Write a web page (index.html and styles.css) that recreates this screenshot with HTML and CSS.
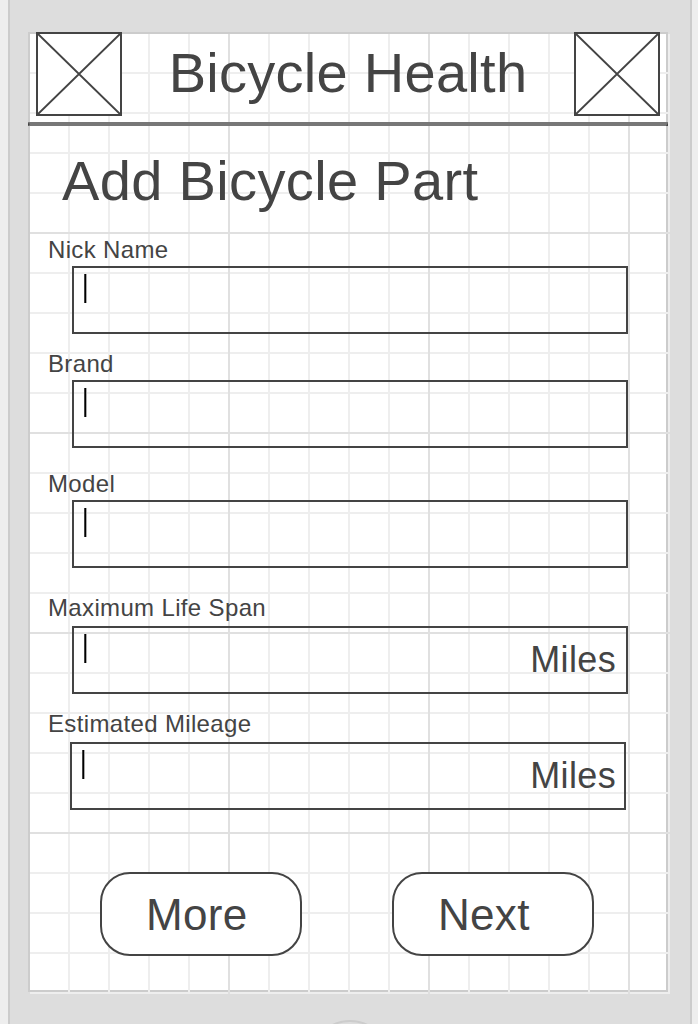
FILE: index.html
```html
<!DOCTYPE html>
<html lang="en">
<head>
<meta charset="utf-8">
<title>Bicycle Health</title>
<link rel="stylesheet" href="styles.css">
</head>
<body>
<div class="phone">
  <main class="screen">
    <div class="grid"></div>
    <header class="header">
      <svg class="placeholder" viewBox="0 0 86 84"><rect x="1" y="1" width="84" height="82"/><path d="M1 1L85 83M85 1L1 83"/></svg>
      <h1 class="title">Bicycle Health</h1>
      <svg class="placeholder" viewBox="0 0 86 84"><rect x="1" y="1" width="84" height="82"/><path d="M1 1L85 83M85 1L1 83"/></svg>
    </header>
    <svg class="rule" viewBox="0 0 640 4"><path class="rule-bar" d="M0 0H640V4H0Z"/><path class="rule-end" d="M0 1L2 2L0 4ZM640 1L638 4H640Z"/></svg>
    <h2 class="heading">Add Bicycle Part</h2>
    <form class="form">
      <div class="row"><label class="label">Nick Name</label><div class="field"><span class="caret"></span></div></div>
      <div class="row row-brand"><label class="label">Brand</label><div class="field"><span class="caret"></span></div></div>
      <div class="row row-model"><label class="label">Model</label><div class="field"><span class="caret"></span></div></div>
      <div class="row row-life"><label class="label">Maximum Life Span</label><div class="field"><span class="caret"></span><span class="unit">Miles</span></div></div>
      <div class="row row-mileage"><label class="label">Estimated Mileage</label><div class="field"><span class="caret"></span><span class="unit">Miles</span></div></div>
      <div class="actions">
        <button class="button" type="button">More</button>
        <button class="button" type="button">Next</button>
      </div>
    </form>
  </main>
  <div class="home"></div>
</div>
</body>
</html>
```
FILE: styles.css
```css
* { box-sizing: border-box; }
body {
  margin: 0;
  height: 1024px;
  overflow: hidden;
  background: #eee;
  color: #444;
  font-family: "Liberation Sans", Arial, sans-serif;
  letter-spacing: 0.35px;
}
.phone {
  width: 684px;
  height: 1024px;
  overflow: hidden;
  margin-left: 8px;
  padding: 32px 18px 0;
  background: #ddd;
  border: 2px solid #ccc;
  border-width: 0 2px;
}
.screen {
  position: relative;
  width: 640px;
  height: 960px;
  background: #fff;
  box-shadow: inset 0 0 0 2px #ccc;
}
.grid {
  position: absolute;
  left: 2px;
  top: 2px;
  width: 640px;
  height: 960px;
  background:
    linear-gradient(to right, transparent 198px, #e0e0e0 198px) 0 0 / 200px 200px,
    linear-gradient(to bottom, transparent 198px, #e0e0e0 198px) 0 0 / 200px 200px,
    linear-gradient(to right, transparent 38px, #eee 38px) 0 0 / 40px 40px,
    linear-gradient(to bottom, transparent 38px, #eee 38px) 0 0 / 40px 40px;
}
.header, .rule, .heading, .form { position: relative; }
.header {
  display: flex;
  justify-content: space-between;
  height: 90px;
  padding: 0 8px;
}
.placeholder { width: 86px; height: 84px; fill: #fff; stroke: #444; stroke-width: 2; }
.placeholder path { stroke-width: 1.8; }
.title, .heading {
  margin: 0;
  font-size: 56px;
  font-weight: 400;
  line-height: 63px;
  white-space: nowrap;
}
.title { padding-top: 9px; letter-spacing: 0.28px; }
.rule { display: block; width: 640px; height: 4px; }
.rule-bar { fill: #777; }
.rule-end { fill: #444; }
.heading { padding: 23px 0 0 34px; }
.form { display: flex; flex-direction: column; padding: 24px 0 0 20px; }
.row { display: flex; flex-direction: column; gap: 3px; }
.row-brand { margin-top: 16px; }
.row-model { margin-top: 22px; }
.row-life { margin-top: 26px; gap: 5px; }
.row-mileage { margin-top: 16px; gap: 5px; }
.label { font-size: 24px; line-height: 27px; }
.field {
  display: flex;
  justify-content: space-between;
  width: 556px;
  height: 68px;
  margin-left: 24px;
  padding: 6px 10px 0 10px;
  border: 2px solid #444;
}
.row-mileage .field { margin-left: 22px; padding-right: 8px; }
.caret {
  width: 3px;
  height: 29px;
  background: linear-gradient(to right, #444 1px, #000 1px 2px, #aaa 2px);
}
.unit { padding-top: 5px; font-size: 36px; line-height: 41px; }
.actions { display: flex; gap: 90px; margin: 62px 0 0 52px; }
.button {
  width: 202px;
  height: 84px;
  padding: 1px 0 0 44px;
  border: 2px solid #444;
  border-radius: 30px;
  background: #fff;
  color: inherit;
  font: 44px/50px "Liberation Sans", Arial, sans-serif;
  letter-spacing: 0.3px;
  text-align: left;
}
.home {
  width: 80px;
  height: 80px;
  margin: 28px 0 0 282px;
  border: 2px solid #ccc;
  border-radius: 50%;
}
```
